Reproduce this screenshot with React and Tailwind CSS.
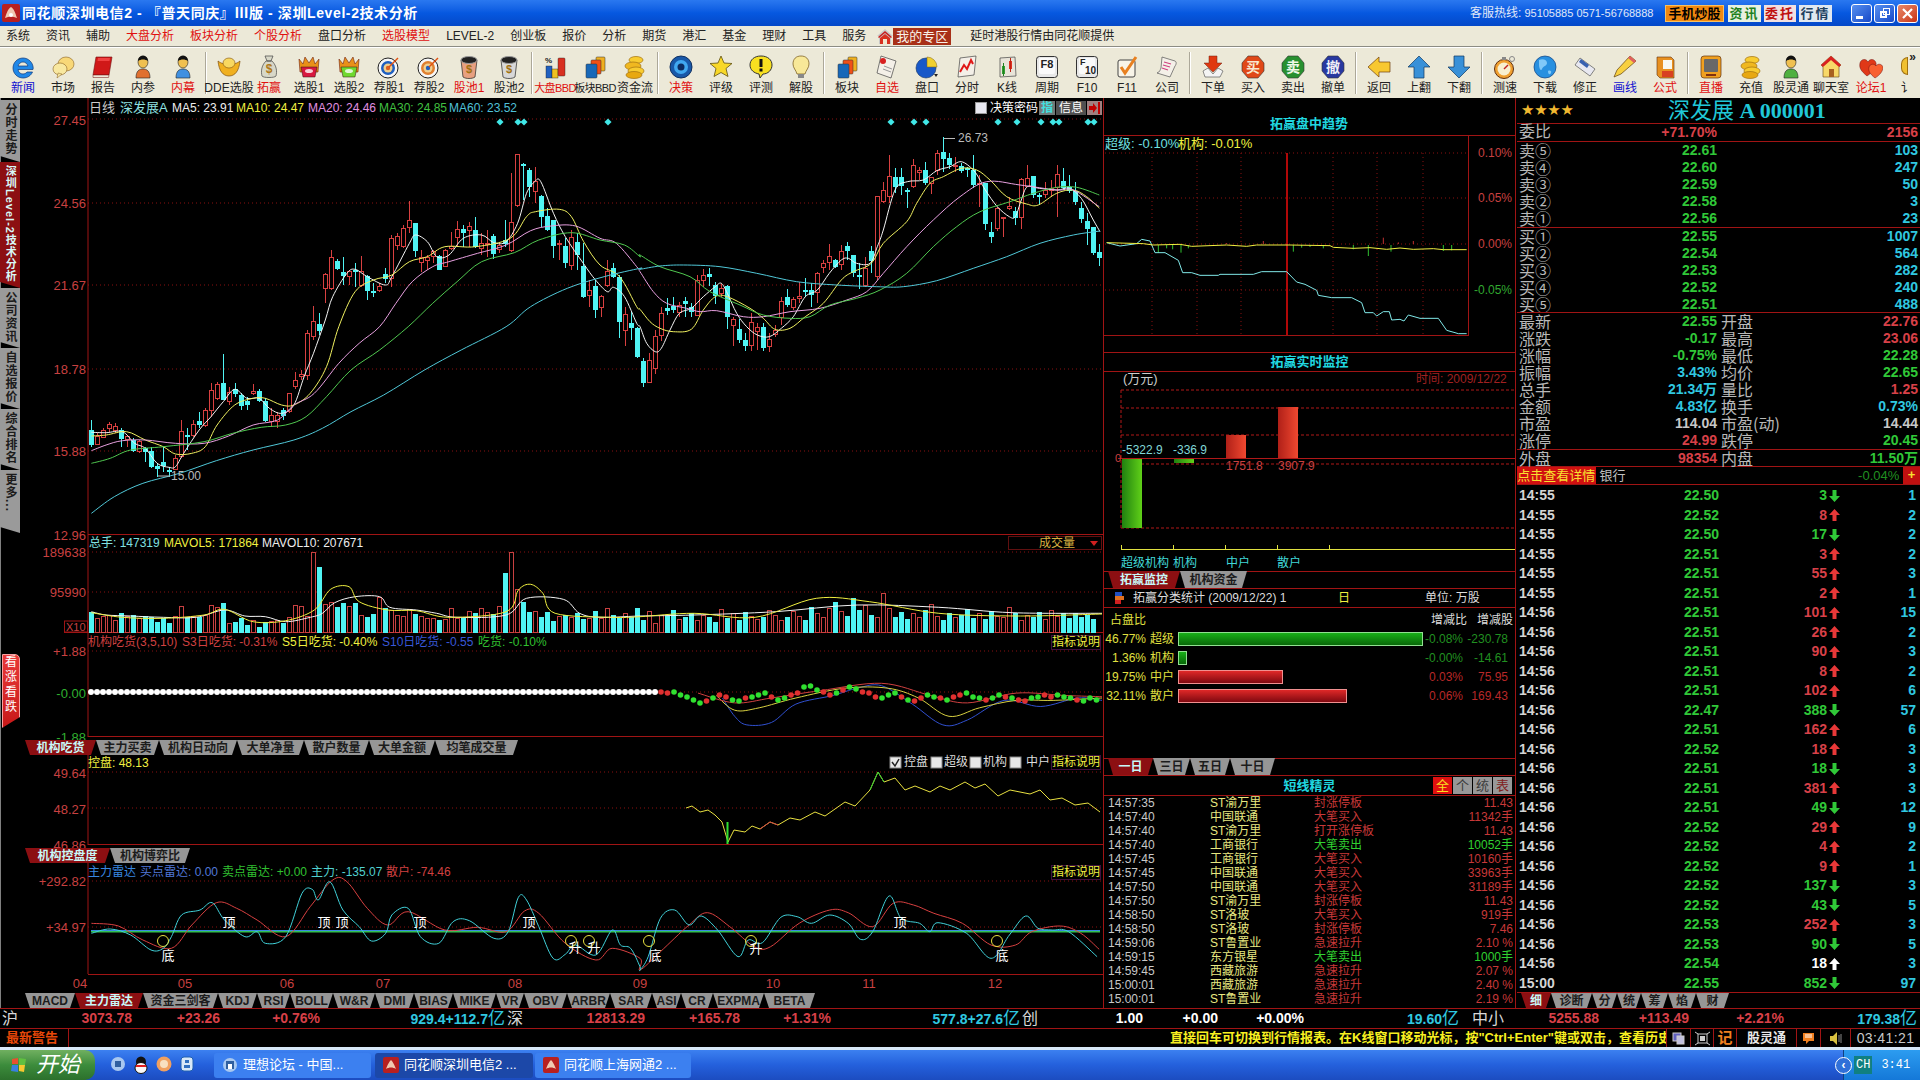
import React from 'react';

const A = [[960,990,1032,1040,1],[1000,1010,1032,1035,0],[985,990,1012,1015,0],[965,972,985,995,0],[970,980,992,1000,0],[985,990,1015,1040,1],[1005,1008,1018,1040,0],[1015,1022,1050,1055,1],[1020,1025,1055,1060,0],[1040,1045,1055,1085,1],[1040,1053,1100,1105,1],[1090,1100,1104,1130,1],[1040,1088,1097,1115,1],[1100,1110,1115,1130,1],[1065,1075,1108,1110,0],[960,995,1068,1075,0],[985,1005,1010,1050,1],[960,972,1005,1010,0],[935,965,972,985,1],[925,930,975,980,0],[850,870,930,950,0],[845,852,895,900,0],[762,850,897,900,1],[860,878,905,915,0],[850,868,880,890,1],[880,885,915,930,1],[890,903,912,930,1],[852,875,880,885,0],[868,873,900,905,1],[895,905,960,965,1],[925,945,965,980,0],[935,945,965,985,0],[925,932,945,960,1],[880,880,935,940,0],[815,842,860,868,0],[810,822,830,840,0],[690,700,825,840,0],[618,665,710,720,0],[640,672,692,705,1],[520,522,565,610,0],[450,472,565,570,0],[478,485,505,510,1],[470,518,526,555,1],[510,515,530,555,0],[490,510,515,560,1],[468,515,555,560,0],[525,530,572,600,1],[550,573,577,590,1],[550,558,570,575,0],[505,522,536,550,1],[405,415,535,560,0],[400,410,435,450,0],[375,385,440,445,0],[303,362,382,400,0],[368,370,450,470,1],[450,472,488,515,0],[465,472,480,510,0],[450,455,470,490,0],[465,468,508,510,1],[448,452,498,500,0],[395,440,445,450,0],[362,388,412,440,0],[375,388,396,440,1],[365,380,392,440,0],[352,392,438,445,1],[400,430,445,465,0],[390,430,432,470,0],[402,408,460,478,1],[430,436,448,460,0],[360,420,430,440,1],[220,368,450,455,0],[162,162,316,320,0],[190,192,195,300,1],[205,210,260,290,1],[200,245,275,310,0],[285,288,350,380,1],[325,348,388,392,1],[360,360,436,475,1],[420,430,433,480,0],[415,438,488,505,1],[390,412,495,510,0],[400,428,462,510,1],[430,498,590,595,1],[540,570,587,620,0],[540,558,627,655,1],[585,590,622,650,0],[480,515,555,560,0],[490,505,528,535,1],[525,532,665,715,1],[620,643,692,738,0],[635,670,682,720,1],[680,685,768,775,1]];
const B = [[775,785,848,862,1],[760,780,848,850,0],[690,708,805,822,0],[620,640,705,722,0],[595,626,630,645,1],[592,620,628,640,1],[605,615,638,650,0],[590,605,610,650,1],[610,622,635,650,1],[525,542,645,648,0],[508,525,540,560,0],[505,522,530,558,1],[545,555,585,612,1],[552,565,580,590,0],[555,558,650,688,1],[650,658,675,738,0],[658,688,718,728,1],[698,720,735,752,1],[640,668,735,752,0],[670,682,695,750,0],[668,682,742,752,1],[700,718,738,755,0],[675,690,704,710,0],[592,603,652,675,0],[568,592,612,620,1],[590,597,622,630,0],[545,590,595,610,0],[535,570,574,590,1],[548,570,582,620,1],[515,520,578,610,0],[480,490,503,520,0],[432,470,487,510,0],[478,480,500,505,1],[435,455,492,510,0],[425,438,452,480,1],[465,466,518,530,1],[490,525,528,568,1],[472,505,555,560,0],[438,453,480,520,1],[288,290,530,540,0],[245,272,305,310,0],[165,230,288,310,0],[205,232,260,278,1],[205,232,255,285,1],[265,272,274,325,1],[178,196,260,265,0],[200,212,216,240,0],[185,210,248,255,1],[230,232,250,282,0],[150,160,212,225,0],[112,156,174,215,1],[160,175,192,208,1],[170,195,198,215,0],[190,200,210,220,1],[200,205,208,230,1],[165,210,252,265,1],[225,250,252,320,0],[250,250,370,390,1],[365,398,408,428,1],[320,325,385,392,0],[350,352,355,410,0],[290,318,325,330,0],[320,333,352,375,1],[235,238,352,388,0],[195,235,258,260,0],[228,228,282,295,1],[280,286,290,315,1],[245,272,282,295,0],[240,265,270,290,0],[195,222,262,350,0],[205,243,262,270,1],[225,262,270,280,1],[245,275,305,315,1],[305,325,355,370,1],[340,365,385,435,1],[380,382,458,465,1],[432,458,472,497,1]];
const candles = [...A.map((c, i) => [91.4 + 6 * i, ...c]), ...B.map((c, i) => [643.3 + 6 * i, ...c])];

const za = (a) => a.map(([x, y]) => [x / 2.45, 100 + y / 3]);
const zb = (a) => a.map(([x, y]) => [640 + x / 3, 100 + y / 3]);
const smooth = (p) => {
  let d = `M${p[0][0].toFixed(1)} ${p[0][1].toFixed(1)}`;
  for (let i = 0; i < p.length - 1; i++) {
    const p0 = p[i - 1] || p[i], p1 = p[i], p2 = p[i + 1], p3 = p[i + 2] || p2;
    d += `C${(p1[0] + (p2[0] - p0[0]) / 6).toFixed(1)} ${(p1[1] + (p2[1] - p0[1]) / 6).toFixed(1)} ${(p2[0] - (p3[0] - p1[0]) / 6).toFixed(1)} ${(p2[1] - (p3[1] - p1[1]) / 6).toFixed(1)} ${p2[0].toFixed(1)} ${p2[1].toFixed(1)}`;
  }
  return d;
};

const MA = [
  ['#f4f4f4', [[224,997],[260,998],[300,995],[330,1030],[356,1045],[385,1090],[414,1102],[430,1100],[450,1060],[488,990],[517,950],[547,905],[575,868],[605,895],[635,895],[660,925],[690,940],[720,915],[745,830],[768,760],[797,660],[815,590],[850,520],[870,508],[900,530],[944,555],[960,530],[1003,430],[1018,405],[1047,425],[1070,470],[1100,465],[1135,415],[1180,405],[1210,428],[1240,425],[1268,370],[1290,280],[1310,245],[1325,245],[1356,340],[1385,410],[1429,490],[1459,540],[1488,575],[1503,562],[1530,590],[1560,670]], [[0,680],[20,730],[46,755],[64,745],[90,690],[118,640],[154,625],[190,590],[226,560],[244,550],[262,580],[290,640],[320,680],[352,705],[388,710],[424,685],[460,650],[496,590],[532,570],[568,520],[604,480],[625,475],[650,490],[690,490],[712,440],[730,390],[765,270],[802,245],[850,240],[890,212],[930,200],[964,185],[1000,210],[1020,240],[1036,270],[1072,320],[1108,350],[1126,350],[1144,300],[1162,260],[1198,265],[1252,270],[1288,265],[1324,295],[1360,360],[1380,395]]],
  ['#f0f060', [[224,1008],[260,1005],[310,995],[356,1020],[400,1040],[430,1062],[470,1060],[503,1040],[532,975],[575,915],[620,895],[650,895],[690,915],[720,915],[760,880],[800,800],[830,680],[870,575],[915,540],[960,525],[1003,485],[1047,470],[1090,440],[1165,440],[1250,415],[1290,350],[1312,335],[1370,328],[1400,350],[1430,425],[1470,495],[1518,530],[1560,620]], [[0,628],[30,665],[60,685],[100,695],[154,688],[190,630],[226,590],[262,590],[330,625],[370,655],[405,688],[450,685],[496,650],[550,610],[604,540],[640,515],[694,490],[730,430],[800,365],[830,310],[870,250],[910,230],[964,205],[1010,210],[1050,240],[1100,290],[1160,312],[1195,315],[1250,280],[1300,270],[1340,290],[1378,325]]],
  ['#e8a0e0', [[224,1052],[260,1035],[300,1022],[356,1020],[430,1030],[500,1030],[560,1008],[620,975],[680,960],[720,915],[770,880],[830,790],[880,730],[930,680],[970,610],[1010,545],[1060,500],[1100,485],[1170,460],[1240,435],[1300,392],[1350,378],[1410,378],[1470,415],[1510,430],[1560,500]], [[0,515],[40,575],[80,610],[140,625],[180,635],[230,632],[310,650],[370,650],[450,635],[540,625],[620,600],[680,575],[730,520],[800,440],[880,360],[960,290],[1040,245],[1140,255],[1250,270],[1300,270],[1378,320]]],
  ['#50c850', [[224,1090],[270,1075],[320,1050],[400,1040],[500,1025],[570,1000],[640,982],[700,975],[750,950],[800,890],[860,810],[930,750],[1000,680],[1060,610],[1120,545],[1180,485],[1260,458],[1320,420],[1400,398],[1470,420],[1530,435],[1568,470]], [[0,465],[60,500],[150,530],[210,575],[300,615],[370,645],[450,655],[510,650],[570,615],[650,595],[720,570],[800,520],[880,440],[950,380],[1020,335],[1110,305],[1180,280],[1250,262],[1310,262],[1378,285]]],
  ['#50c8d8', [[224,1240],[280,1190],[350,1150],[440,1120],[530,1082],[620,1050],[720,1020],[790,985],[860,935],[940,885],[1040,810],[1130,750],[1240,680],[1300,620],[1390,565],[1480,530],[1568,505]], [[0,508],[60,498],[130,495],[240,500],[350,520],[470,545],[590,555],[710,560],[790,560],[890,542],[1000,505],[1100,470],[1200,430],[1300,405],[1380,393]]],
];

const volTops = [245,265,260,255,270,250,258,255,265,258,262,275,265,280,258,228,260,260,262,255,225,232,220,280,275,265,285,270,290,275,275,272,280,262,225,228,260,68,112,222,218,232,218,228,220,255,260,252,202,235,240,255,258,238,252,260,265,265,270,268,235,265,265,243,250,235,248,252,228,130,68,178,215,245,243,262,245,272,258,255,262,248,268,265,243,265,235,256,265,
 250,262,235,270,245,280,255,258,240,268,262,250,272,255,262,275,238,265,250,270,245,258,268,262,240,255,272,262,245,258,270,230,250,262,235,215,245,258,205,240,225,255,262,190,235,260,245,268,250,262,240,222,258,270,248,262,255,238,265,250,268,242,258,262,232,250,270,255,262,245,268,240,258,250,264,248,262,255,268];
const volPts = { w: [[224,245],[260,255],[320,258],[400,262],[480,262],[550,240],[600,258],[650,260],[700,275],[760,262],[790,250],[820,218],[870,200],[930,200],[955,232],[1020,240],[1070,250],[1120,262],[1240,255],[1290,205],[1380,208],[1420,250],[1470,262],[1568,258],[1700,255],[1900,245],[2100,225],[2300,232],[2480,248],[2700,250]], y: [[224,248],[300,262],[400,265],[500,255],[550,238],[620,275],[700,272],[770,240],[810,178],[855,170],[880,215],[950,240],[1020,242],[1100,262],[1240,245],[1270,180],[1300,163],[1330,190],[1360,250],[1500,262],[1568,260],[1700,250],[1850,262],[2000,205],[2130,215],[2300,250],[2500,258],[2700,252]] };
const v = (a) => a.map(([x, y]) => [x / 2.45, 530 + y / 3]);

const radar = {
  cy: [[224,310],[270,297],[320,315],[370,360],[400,355],[420,320],[445,255],[490,240],[520,218],[550,270],[600,320],[630,305],[650,340],[700,320],[740,190],[765,178],[780,210],[808,155],[840,240],[880,290],[910,333],[945,310],[960,255],[1000,235],[1030,320],[1075,340],[1110,275],[1150,272],[1210,325],[1245,305],[1270,202],[1290,210],[1320,290],[1355,385],[1385,373],[1410,345],[1460,375],[1500,300],[1520,345],[1545,355],[1568,410]],
  cy2: [[0,420],[20,380],[50,265],[85,240],[120,285],[150,258],[190,300],[240,380],[265,330],[300,338],[345,262],[385,260],[420,280],[465,255],[510,280],[540,328],[570,305],[610,198],[640,265],[685,280],[710,305],[730,278],[800,310],[860,385],[905,315],[945,258],[975,295],[1010,300],[1050,305],[1120,380]],
  r: [[224,280],[290,288],[350,330],[420,355],[470,285],[530,218],[580,235],[630,270],[700,320],[760,230],[815,150],[850,155],[900,235],[950,285],[1000,245],[1090,300],[1170,292],[1240,305],[1285,243],[1320,250],[1385,340],[1460,390],[1500,355],[1568,385]],
  r2: [[0,420],[50,365],[120,285],[165,248],[220,290],[280,350],[320,350],[390,280],[465,240],[510,248],[570,290],[620,220],[670,225],[720,250],[790,280],[860,345],[920,345],[960,305],[1030,288],[1080,310],[1125,358]],
};
const r9 = (a) => a.map(([x, y]) => [x / 2.45, 830 + y / 3]);
const r10 = (a) => a.map(([x, y]) => [640 + x / 2.45, 830 + y / 3]);

const RED = '#a01414';
const AX = '#c84040';

function Grid({ y, x1 = 88, x2 = 1104 }) {
  return <line x1={x1} x2={x2} y1={y} y2={y} stroke="#8a1010" strokeDasharray="1 3" />;
}
function Ax({ y, children, fill = AX }) {
  return <text x="86" y={y + 5} textAnchor="end" fontSize="13" fill={fill}>{children}</text>;
}
function T({ x, y, fill = '#ddd', size = 12, children, anchor }) {
  return <text x={x} y={y + 4} fontSize={size} fill={fill} textAnchor={anchor}>{children}</text>;
}

function KlinePlot() {
  const dia = [500, 518, 524, 608, 891, 914, 926, 998, 1017, 1041, 1053, 1059, 1088, 1094];
  return (
    <svg width="1084" height="437" viewBox="20 98 1084 437" className="block overflow-visible">
      {[119, 203, 285, 369, 451].map((y) => <Grid key={y} y={y} />)}
      <line x1="88" x2="88" y1="98" y2="535" stroke={RED} />
      <line x1="88" x2="1104" y1="534.5" y2="534.5" stroke={RED} />
      <Ax y={120}>27.45</Ax><Ax y={203}>24.56</Ax><Ax y={285}>21.67</Ax><Ax y={369}>18.78</Ax><Ax y={451}>15.88</Ax><Ax y={535}>12.96</Ax>
      <T x={89} y={108} fill="#ccc" size={13}>日线</T>
      <T x={120} y={108} fill="#90e0e0" size={13}>深发展A</T>
      <T x={172} y={108} fill="#eee">MA5: 23.91</T>
      <T x={236} y={108} fill="#f0f040">MA10: 24.47</T>
      <T x={308} y={108} fill="#e090e0">MA20: 24.46</T>
      <T x={379} y={108} fill="#40c040">MA30: 24.85</T>
      <T x={449} y={108} fill="#50c0d8">MA60: 23.52</T>
      {dia.map((x) => <rect key={x} x={x - 2.5} y={119.5} width="5" height="5" fill="#40e8e8" transform={`rotate(45 ${x} 122)`} />)}
      {candles.map(([x, h, t, b, l, c], i) => {
        const X = Math.round(x);
        const col = c ? '#50f4f4' : '#d84040';
        const yy = (n) => 100 + n / 3;
        return (
          <g key={i} shapeRendering="crispEdges">
            <line x1={X + 0.5} x2={X + 0.5} y1={yy(h)} y2={yy(l)} stroke={col} />
            <rect x={X - 1.5} y={yy(t)} width="4" height={Math.max(1, (b - t) / 3)} fill={c ? col : '#000'} stroke={col} />
          </g>
        );
      })}
      {MA.map(([col, a, b]) => <path key={col} d={smooth([...za(a), ...zb(b)])} fill="none" stroke={col} strokeWidth="1" />)}
      <line x1="944" x2="955" y1="138.5" y2="138.5" stroke="#bbb" />
      <T x={958} y={138} fill="#bbb" size={12}>26.73</T>
      <line x1="158" x2="170" y1="476" y2="476" stroke="#bbb" />
      <T x={171} y={476} fill="#bbb" size={12}>15.00</T>
    </svg>
  );
}

function VolPlot() {
  return (
    <svg width="1104" height="98" viewBox="0 535 1104 98" className="block">
      <line x1="88" x2="88" y1="535" y2="633" stroke={RED} />
      <Grid y={552} /><Grid y={592} />
      <line x1="64" x2="1104" y1="632.5" y2="632.5" stroke={RED} />
      <rect x="64.5" y="621" width="23" height="11" fill="none" stroke={RED} />
      <text x="66" y="631" fontSize="11" fill={AX}>X10</text>
      <Ax y={552}>189638</Ax><Ax y={592}>95990</Ax>
      <T x={89} y={543} fill="#80e0e0">总手: 147319</T>
      <T x={164} y={543} fill="#f0f040">MAVOL5: 171864</T>
      <T x={262} y={543} fill="#eee">MAVOL10: 207671</T>
      {volTops.map((t, i) => {
        const c = candles[i] ? candles[i][5] : 0;
        const X = Math.round(91.4 + 6 * i);
        const y = 530 + t / 3;
        return c
          ? <rect key={i} x={X - 2} y={y} width="5" height={632.5 - y} fill="#50f4f4" shapeRendering="crispEdges" />
          : <rect key={i} x={X - 1.5} y={y} width="4" height={632.5 - y} fill="#000" stroke="#c84040" shapeRendering="crispEdges" />;
      })}
      <path d={smooth(v(volPts.w))} fill="none" stroke="#f4f4f4" />
      <path d={smooth(v(volPts.y))} fill="none" stroke="#f0f040" />
    </svg>
  );
}

const dotCols = 'rrgggggrgrrggrgggrggrrgggrrgrggrrrgggrgrrggrgrrgggrggrgrrggrrgggrg';
const dotY = [0,1,0,3,5,8,11,9,6,3,5,8,9,6,5,3,1,5,8,6,3,1,-5,-6,-2,0,3,1,-2,-5,-3,0,1,5,6,3,1,5,8,9,6,3,5,6,8,5,3,1,5,6,8,6,3,5,6,8,9,6,5,3,5,3,5,6,8,9,6,8];

function IndicatorPlot() {
  const white = [];
  for (let x = 91; x < 660; x += 6) white.push(x);
  const sc = (a) => a.map(([x, y]) => [x * 1.2245, y * 1.2245]);
  return (
    <svg width="1104" height="104" viewBox="0 633 1104 104" className="block overflow-visible">
      <line x1="88" x2="88" y1="633" y2="737" stroke={RED} />
      <Grid y={651} /><Grid y={692} />
      <line x1="88" x2="1104" y1="736.5" y2="736.5" stroke={RED} />
      <Ax y={651}>+1.88</Ax><Ax y={693} fill="#30b030">-0.00</Ax><Ax y={737} fill="#30b030">-1.88</Ax>
      <T x={88} y={642} fill="#d04040">机构吃货(3,5,10)</T>
      <T x={182} y={642} fill="#d04040">S3日吃货: -0.31%</T>
      <T x={282} y={642} fill="#f0f040">S5日吃货: -0.40%</T>
      <T x={382} y={642} fill="#3858d8">S10日吃货: -0.55</T>
      <T x={478} y={642} fill="#30c030">吃货: -0.10%</T>
      <path d={smooth(sc([[590,570],[600,585],[610,592],[630,590],[650,575],[680,568],[700,562],[720,560],[745,575],[770,592],[790,588],[820,572],[850,577],[880,570],[900,572]]))} fill="none" stroke="#3050d0" />
      <path d={smooth(sc([[585,568],[600,580],[620,578],[650,570],[690,562],[725,562],[750,570],[775,585],[800,578],[830,572],[860,572],[900,570]]))} fill="none" stroke="#d8d040" />
      <path d={smooth(sc([[570,566],[600,574],[630,570],[670,564],[720,558],[760,568],[790,574],[830,566],[870,568],[900,569]]))} fill="none" stroke="#d04040" />
      {white.map((x) => <circle key={x} cx={x} cy={692} r="3" fill="#fff" />)}
      {dotY.map((d, i) => <circle key={i} cx={661 + i * 6.5} cy={692 + d} r="2.8" fill={dotCols[i] === 'r' ? '#e03030' : '#30e030'} />)}
    </svg>
  );
}

function KongPlot() {
  const line = [[686,808],[692,806],[700,812],[708,810],[715,815],[722,822],[728,842],[734,830],[745,832],[752,826],[760,829],[770,822],[778,825],[790,818],[800,820],[815,812],[825,816],[845,802],[855,806],[870,790],[878,772],[884,782],[895,778],[905,790],[915,786],[930,792],[940,786],[950,790],[965,782],[975,788],[985,784],[998,796],[1010,790],[1030,794],[1040,790],[1050,800],[1062,798],[1075,805],[1088,803],[1100,812]];
  const boxes = [[890, 1, '控盘', 904], [931, 0, '超级', 944], [970, 0, '机构', 983], [1010, 0, '中户', 1026]];
  return (
    <svg width="1104" height="90" viewBox="0 755 1104 90" className="block overflow-visible">
      <line x1="88" x2="88" y1="755" y2="845" stroke={RED} />
      <Grid y={772} /><Grid y={808} />
      <line x1="88" x2="1104" y1="844.5" y2="844.5" stroke={RED} />
      <Ax y={773}>49.64</Ax><Ax y={809}>48.27</Ax><Ax y={845}>46.86</Ax>
      <T x={88} y={763} fill="#f0f040">控盘: 48.13</T>
      <polyline points={line.map((p) => p.join(',')).join(' ')} fill="none" stroke="#e8e040" />
      <polyline points="760,829 770,822 778,825" fill="none" stroke="#d04040" />
      <polyline points="870,790 878,772 884,782" fill="none" stroke="#30d030" />
      <line x1="727.5" x2="727.5" y1="822" y2="844" stroke="#30e030" strokeWidth="2" />
      {boxes.map(([x, c, t, tx]) => (
        <g key={t}>
          <rect x={x} y={757} width="11" height="11" fill="#e8e8e8" stroke="#888" />
          {c ? <polyline points={`${x + 2},762 ${x + 5},766 ${x + 9},759`} fill="none" stroke="#222" strokeWidth="1.5" /> : null}
          <T x={tx} y={762} fill="#ddd">{t}</T>
        </g>
      ))}
    </svg>
  );
}

function Mark({ x, y, t, c, cx }) {
  return (
    <g>
      {c ? <circle cx={cx} cy={941} r="5.5" fill="none" stroke="#e8e040" /> : null}
      <text x={x} y={y} fontSize="13" fill="#fff" textAnchor="middle">{t}</text>
    </g>
  );
}

function RadarPlot() {
  const months = [['04', 80], ['05', 185], ['06', 287], ['07', 383], ['08', 515], ['09', 640], ['10', 773], ['11', 869], ['12', 995]];
  const tops = [[229, '顶'], [324, '顶'], [342, '顶'], [420, '顶'], [529, '顶'], [900, '顶']];
  return (
    <svg width="1104" height="130" viewBox="0 863 1104 130" className="block">
      <line x1="88" x2="88" y1="863" y2="974" stroke={RED} />
      <Grid y={881} /><Grid y={927} />
      <line x1="88" x2="1104" y1="974.5" y2="974.5" stroke={RED} />
      <Ax y={881}>+292.82</Ax><Ax y={927}>+34.97</Ax>
      <T x={88} y={872} fill="#3888e0">主力雷达</T>
      <T x={140} y={872} fill="#5078d8">买点雷达: 0.00</T>
      <T x={222} y={872} fill="#30c030">卖点雷达: +0.00</T>
      <T x={311} y={872} fill="#50d0d0">主力: -135.07</T>
      <T x={386} y={872} fill="#d04040">散户: -74.46</T>
      <line x1="91" x2="1100" y1="931.5" y2="931.5" stroke="#30c050" strokeWidth="2" />
      <line x1="91" x2="1100" y1="930.5" y2="930.5" stroke="#3888e0" />
      <path d={smooth([...r9(radar.r), ...r10(radar.r2)])} fill="none" stroke="#d84040" />
      <path d={smooth([...r9(radar.cy), ...r10(radar.cy2)])} fill="none" stroke="#40d0d8" />
      {tops.map(([x, t]) => <Mark key={x} x={x} y={927} t={t} />)}
      <Mark x={168} y={960} t="底" c cx={163} />
      <Mark x={575} y={952} t="升" c cx={571} />
      <Mark x={594} y={952} t="升" c cx={589} />
      <Mark x={655} y={960} t="底" c cx={649} />
      <Mark x={756} y={953} t="升" c cx={751} />
      <Mark x={1002} y={960} t="底" c cx={997} />
      {months.map(([t, x]) => <text key={t} x={x} y="988" fontSize="13" fill={AX} textAnchor="middle">{t}</text>)}
    </svg>
  );
}

function Tab({ w, active, children, h = 'h-[15px]' }) {
  return (
    <div style={{ width: w }} className={`${h} flex items-center justify-center text-[12px] font-bold whitespace-nowrap [clip-path:polygon(0_0,100%_0,calc(100%-5px)_100%,5px_100%)] ${active ? 'bg-[#8c0f12] text-[#c8f8f8]' : 'bg-[#969696] text-[#1c1c1c]'}`}>
      {children}
    </div>
  );
}
function TabRow({ items, h, cls = 'pl-[25px]' }) {
  return (
    <div className={`flex items-center ${cls}`}>
      {items.map(([t, w, a]) => <Tab key={t} w={w} active={a} h={h}>{t}</Tab>)}
    </div>
  );
}

function Note() {
  return <div className="absolute right-[3px] w-[50px] h-[15px] border border-[#401040] text-[12px] leading-[13px] text-[#f0f040] text-center whitespace-nowrap">指标说明</div>;
}

function SideTab({ h, active, t, size = 'text-[12px]' }) {
  return (
    <div style={{ height: h }} className={`w-[20px] flex justify-start pt-[3px] items-center font-bold ${size} [writing-mode:vertical-rl] whitespace-nowrap tracking-[1px] [clip-path:polygon(0_0,100%_0,100%_100%,0_calc(100%-6px))] ${active ? 'bg-[#8c0f12] text-[#d8f8f8]' : 'bg-[#9a9a9a] text-[#1c1c1c]'}`}>
      {t}
    </div>
  );
}

function LeftCol() {
  return (
    <div className="w-[1104px] flex flex-col">
      <div className="relative flex h-[437px]">
        <div className="flex flex-col w-[20px] pt-[2px]">
          <SideTab h={62} t="分时走势" />
          <SideTab h={126} active t="深圳Level-2技术分析" size="text-[11px]" />
          <SideTab h={60} t="公司资讯" />
          <SideTab h={61} t="自选报价" />
          <SideTab h={61} t="综合排名" />
          <SideTab h={63} t="更多..." />
        </div>
        <KlinePlot />
        <div className="absolute top-[3px] left-[975px] flex items-center h-[14px]">
          <div className="w-[12px] h-[12px] bg-[#e8e8f0] border border-[#999]" />
          <span className="ml-[3px] w-[48px] text-[12px] text-white whitespace-nowrap">决策密码</span>
          <span className="ml-[1px] w-[16px] h-[14px] bg-[#707878] text-[12px] font-bold text-[#40e0e0] leading-[14px] text-center">指</span>
          <span className="ml-[1px] w-[30px] h-[14px] bg-[#505050] text-[12px] text-white leading-[14px] text-center">信息</span>
          <span className="ml-[1px] w-[15px] h-[14px] bg-[#a08080] flex items-center justify-center">
            <svg width="12" height="12" viewBox="0 0 12 12"><path d="M0 4h4V1l4 5-4 5V8H0z" fill="#c00000" /><rect x="9" y="0" width="2" height="12" fill="#c00000" /></svg>
          </span>
        </div>
      </div>
      <div className="relative h-[98px]">
        <VolPlot />
        <div className="absolute top-[1px] right-[2px] w-[94px] h-[14px] border border-[#601010] text-[12px] leading-[12px] text-[#d8b040] pl-[30px]">
          成交量
          <span className="absolute right-[3px] top-[4px] w-0 h-0 border-x-[4px] border-x-transparent border-t-[5px] border-t-[#d02020]" />
        </div>
      </div>
      <div className="relative h-[104px]">
        <IndicatorPlot />
        <div className="absolute top-[2px] right-0 left-0"><Note /></div>
        <div className="absolute left-[2px] top-[21px] w-[18px] h-[74px] rounded-r-[5px] bg-gradient-to-b from-[#e83838] to-[#c81818] border border-[#f8a0a0] text-[12px] leading-[15px] text-white flex flex-col items-center whitespace-nowrap [clip-path:polygon(0_0,100%_0,100%_85%,0_100%)]">
          <span>看</span><span>涨</span><span>看</span><span>跌</span>
        </div>
      </div>
      <div className="h-[18px] pt-[3px]"><TabRow h="h-[15px]" items={[['机构吃货', 71, 1], ['主力买卖', 63], ['机构日动向', 78], ['大单净量', 67], ['散户数量', 65], ['大单金额', 66], ['均笔成交量', 83]]} /></div>
      <div className="relative h-[90px]">
        <KongPlot />
        <div className="absolute top-0 right-0 left-0"><Note /></div>
      </div>
      <div className="h-[18px] pt-[3px]"><TabRow h="h-[15px]" items={[['机构控盘度', 85, 1], ['机构博弈比', 80]]} /></div>
      <div className="relative h-[130px]">
        <RadarPlot />
        <div className="absolute top-[2px] right-0 left-0"><Note /></div>
      </div>
      <div className="h-[15px]">
        <TabRow h="h-[15px]" items={[['MACD', 50], ['主力雷达', 68, 1], ['资金三剑客', 75], ['KDJ', 39], ['RSI', 33], ['BOLL', 43], ['W&R', 42], ['DMI', 39], ['BIAS', 39], ['MIKE', 43], ['VR', 28], ['OBV', 43], ['ARBR', 43], ['SAR', 42], ['ASI', 29], ['CR', 32], ['EXPMA', 51], ['BETA', 51]]} />
      </div>
    </div>
  );
}

function TrendPlot() {
  const pt = (a) => a.map(([x, y]) => [1100 + x / 3, 100 + y / 3].join(',')).join(' ');
  const cy = [[20,425],[60,435],[110,428],[125,415],[150,420],[165,455],[195,455],[235,478],[248,515],[275,515],[300,523],[355,523],[360,520],[460,520],[485,512],[560,512],[590,543],[615,550],[650,568],[655,583],[695,590],[755,590],[785,605],[795,635],[820,635],[830,645],[850,632],[868,632],[875,657],[900,655],[912,660],[925,642],[960,652],[1015,652],[1040,688],[1065,695],[1075,698],[1100,698]];
  const ye = [[20,425],[130,428],[160,432],[240,430],[275,436],[380,432],[440,436],[470,432],[570,432],[690,434],[700,439],[760,442],[810,440],[860,445],[900,441],[940,445],[1000,443],[1030,446],[1100,446]];
  const ticksG = [[175,455],[200,442],[218,445],[243,455],[265,442],[580,452],[605,440],[630,438],[670,442],[760,445],[805,465],[873,452],[1030,450],[1055,448]];
  const ticksR = [[380,426],[490,420],[850,410],[895,424],[940,420]];
  return (
    <svg width="411" height="200" viewBox="1104 135 411 200" className="block">
      {[152, 197, 243, 289].map((y) => <line key={y} x1="1105" x2="1468" y1={y} y2={y} stroke="#8a1010" strokeDasharray="1 3" />)}
      {[1152, 1197, 1241, 1333, 1377, 1423].map((x) => <line key={x} x1={x} x2={x} y1="152" y2="335" stroke="#8a1010" strokeDasharray="1 3" />)}
      <line x1="1287" x2="1287" y1="152" y2="335" stroke="#b00808" strokeWidth="2" />
      <line x1="1468.5" x2="1468.5" y1="135" y2="335" stroke={RED} />
      <line x1="1104" x2="1469" y1="334.5" y2="334.5" stroke={RED} />
      <T x={1105} y={143} fill="#70e0e0" size={13}>超级: -0.10%</T>
      <T x={1178} y={143} fill="#f0f040" size={13}>机构: -0.01%</T>
      {ticksG.map(([x, y]) => <line key={x} x1={1100 + x / 3} x2={1100 + x / 3} y1="244" y2={100 + y / 3} stroke="#30c030" />)}
      {ticksR.map(([x, y]) => <line key={x} x1={1100 + x / 3} x2={1100 + x / 3} y1="243" y2={100 + y / 3} stroke="#c03030" />)}
      <polyline points={pt(cy)} fill="none" stroke="#80e8e8" />
      <polyline points={pt(ye)} fill="none" stroke="#f0f040" />
      <T x={1478} y={152} fill={AX} size={12}>0.10%</T>
      <T x={1478} y={197} fill={AX} size={12}>0.05%</T>
      <T x={1478} y={243} fill={AX} size={12}>0.00%</T>
      <T x={1474} y={289} fill="#30a830" size={12}>-0.05%</T>
    </svg>
  );
}

function RealPlot() {
  return (
    <svg width="411" height="199" viewBox="1104 371 411 199" className="block">
      <defs>
        <linearGradient id="gg" x1="0" x2="1" y1="0" y2="0"><stop offset="0" stopColor="#208010" /><stop offset="1" stopColor="#60d018" /></linearGradient>
        <linearGradient id="rr" x1="0" x2="1" y1="0" y2="0"><stop offset="0" stopColor="#b02018" /><stop offset="1" stopColor="#f04830" /></linearGradient>
      </defs>
      <T x={1123} y={378} fill="#ccc" size={13}>(万元)</T>
      <text x="1416" y="382" fontSize="12" fill="#a02020">时间: 2009/12/22</text>
      {[389, 407, 434, 463, 527].map((y) => <line key={y} x1="1121" x2="1515" y1={y} y2={y} stroke="#b01818" strokeDasharray="3 2" />)}
      <line x1="1121" x2="1121" y1="389" y2="527" stroke="#b01818" strokeDasharray="3 2" />
      <line x1="1118" x2="1515" y1="457.5" y2="457.5" stroke="#b01818" />
      <text x="1115" y="461" fontSize="11" fill={AX}>0</text>
      <rect x="1122" y="458" width="20" height="69" fill="url(#gg)" />
      <rect x="1174" y="458" width="20" height="4" fill="url(#gg)" />
      <rect x="1226" y="434" width="20" height="23" fill="url(#rr)" />
      <rect x="1278" y="406" width="20" height="51" fill="url(#rr)" />
      <T x={1122} y={449} fill="#80d8d8" size={12}>-5322.9</T>
      <T x={1173} y={449} fill="#80d8d8" size={12}>-336.9</T>
      <T x={1226} y={465} fill="#c84040" size={12}>1751.8</T>
      <T x={1278} y={465} fill="#c84040" size={12}>3907.9</T>
      <line x1="1121" x2="1515" y1="548.5" y2="548.5" stroke="#e0e040" />
      {[1121, 1173, 1225, 1277, 1329].map((x) => <line key={x} x1={x + 0.5} x2={x + 0.5} y1="544" y2="548" stroke="#e0e040" />)}
      <T x={1121} y={562} fill="#40d8d8" size={12}>超级机构</T>
      <T x={1173} y={562} fill="#40d8d8" size={12}>机构</T>
      <T x={1226} y={562} fill="#40d8d8" size={12}>中户</T>
      <T x={1277} y={562} fill="#40d8d8" size={12}>散户</T>
    </svg>
  );
}

const stat = [
  ['46.77%', '超级', 'w-[245px]', 'g', '-0.08%', '-230.78'],
  ['1.36%', '机构', 'w-[9px]', 'g', '-0.00%', '-14.61'],
  ['19.75%', '中户', 'w-[105px]', 'r', '0.03%', '75.95'],
  ['32.11%', '散户', 'w-[169px]', 'r', '0.06%', '169.43'],
];

const sprite = [
  ['14:57:35','ST渝万里','封涨停板','11.43','r'],['14:57:40','中国联通','大笔买入','11342手','r'],['14:57:40','ST渝万里','打开涨停板','11.43','r'],['14:57:40','工商银行','大笔卖出','10052手','g'],['14:57:45','工商银行','大笔买入','10160手','r'],['14:57:45','中国联通','大笔买入','33963手','r'],['14:57:50','中国联通','大笔买入','31189手','r'],['14:57:50','ST渝万里','封涨停板','11.43','r'],['14:58:50','ST洛玻','大笔买入','919手','r'],['14:58:50','ST洛玻','封涨停板','7.46','r'],['14:59:06','ST鲁置业','急速拉升','2.10 %','r'],['14:59:15','东方银星','大笔卖出','1000手','g'],['14:59:45','西藏旅游','急速拉升','2.07 %','r'],['15:00:01','西藏旅游','急速拉升','2.40 %','r'],['15:00:01','ST鲁置业','急速拉升','2.19 %','r'],
];

function MidCol() {
  return (
    <div className="relative w-[411px] flex flex-col border-l-0">
      <div className="h-[37px] flex items-end justify-center pb-[2px] pr-[1px] text-[13px] font-bold text-[#20d8e0]">拓赢盘中趋势</div>
      <div className="border-t border-[#a01414]"><TrendPlot /></div>
      <div className="h-[16px]" />
      <div className="h-[20px] border-y border-[#a01414] flex items-center justify-center text-[13px] font-bold text-[#20d8e0]">拓赢实时监控</div>
      <RealPlot />
      <div className="h-[18px] border-y border-[#a01414] flex items-end">
        <TabRow h="h-[17px]" cls="pl-[4px]" items={[['拓赢监控', 72, 1], ['机构资金', 67]]} />
      </div>
      <div className="h-[19px] border-b border-[#a01414] flex items-center pl-[10px] text-[12px] text-[#ddd] whitespace-nowrap">
        <svg width="12" height="12" viewBox="0 0 12 12" className="mr-[7px]"><rect x="1" y="0" width="7" height="4" fill="#2050c0" /><rect x="1" y="4" width="9" height="4" fill="#e07020" /><rect x="1" y="8" width="6" height="4" fill="#d02020" /></svg>
        <span className="w-[205px]">拓赢分类统计 (2009/12/22) 1</span>
        <span className="w-[87px] text-[#f0f040]">日</span>
        <span>单位: 万股</span>
      </div>
      <div className="h-[150px] pt-[3px] text-[12px]">
        <div className="h-[18px] flex items-center whitespace-nowrap">
          <span className="ml-[6px] w-[226px] text-[#e0e040]">占盘比</span>
          <span className="ml-[95px] w-[37px] text-[#ddd]">增减比</span>
          <span className="ml-[9px] text-[#ddd]">增减股</span>
        </div>
        {stat.map(([p, l, w, c, a, b]) => (
          <div key={l} className="h-[19px] flex items-center whitespace-nowrap">
            <span className="w-[42px] text-right text-[#e0e040]">{p}</span>
            <span className="ml-[4px] w-[28px] text-[#e0e040]">{l}</span>
            <div className="w-[245px] ml-[0px]">
              <div className={`h-[14px] ${w} border ${c === 'g' ? 'border-[#90e090] bg-gradient-to-b from-[#18b018] to-[#086808]' : 'border-[#f09090] bg-gradient-to-b from-[#e02828] to-[#800810]'}`} />
            </div>
            <span className={`w-[40px] text-right ${c === 'g' ? 'text-[#209020]' : 'text-[#b82828]'}`}>{a}</span>
            <span className={`w-[45px] text-right ${c === 'g' ? 'text-[#209020]' : 'text-[#b82828]'}`}>{b}</span>
          </div>
        ))}
      </div>
      <div className="h-[18px] border-y border-[#a01414] flex items-end">
        <TabRow h="h-[17px]" cls="pl-[4px]" items={[['一日', 45, 1], ['三日', 37], ['五日', 40], ['十日', 45]]} />
      </div>
      <div className="relative h-[20px] border-b border-[#a01414] flex items-center justify-center text-[13px] font-bold text-[#20d8e0]">
        短线精灵
        <div className="absolute right-[3px] top-[1px] flex text-[13px] font-normal">
          <span className="w-[19px] h-[17px] leading-[17px] text-center bg-[#e01010] text-[#f8e020]">全</span>
          <span className="w-[19px] h-[17px] leading-[17px] text-center bg-[#989898] text-[#3a3a3a] ml-[1px]">个</span>
          <span className="w-[19px] h-[17px] leading-[17px] text-center bg-[#989898] text-[#3a3a3a] ml-[1px]">统</span>
          <span className="w-[19px] h-[17px] leading-[17px] text-center bg-[#989898] text-[#802020] ml-[1px]">表</span>
        </div>
      </div>
      <div className="pl-[4px] pr-[2px] pt-[0px] text-[12px]">
        {sprite.map(([t, n, e, val, c], i) => (
          <div key={i} className="h-[14px] leading-[14px] flex whitespace-nowrap">
            <span className="w-[102px] text-[#c8c8c8]">{t}</span>
            <span className="w-[104px] text-[#e8e880]">{n}</span>
            <span className={`w-[90px] ${c === 'g' ? 'text-[#30d030]' : 'text-[#c83838]'}`}>{e}</span>
            <span className={`w-[109px] text-right ${c === 'g' ? 'text-[#30d030]' : 'text-[#c83838]'}`}>{val}</span>
          </div>
        ))}
      </div>
    </div>
  );
}

const G = 'text-[#30c838]', Rr = 'text-[#d84048]', C = 'text-[#30c8e0]', W = 'text-[#c8c8c8]';
const Lb = ({ children }) => <span className="font-['Noto_Sans_CJK_SC',sans-serif] text-[16px] leading-[17px] text-[#b8b8b8] whitespace-nowrap">{children}</span>;

function Q({ l, p, q }) {
  return (
    <div className="h-[17px] flex items-center">
      <span className="w-[198px] flex justify-between"><Lb>{l}</Lb><span className={`${G} text-[14px] font-bold leading-[17px]`}>{p}</span></span>
      <span className={`w-[201px] text-right ${C} text-[14px] font-bold leading-[17px]`}>{q}</span>
    </div>
  );
}
function S({ a, av, ac, b, bv, bc }) {
  return (
    <div className="h-[17px] flex items-center">
      <span className="w-[198px] flex justify-between"><Lb>{a}</Lb><span className={`${ac} text-[14px] font-bold leading-[17px]`}>{av}</span></span>
      <span className="w-[201px] pl-[4px] flex justify-between"><Lb>{b}</Lb><span className={`${bc} text-[14px] font-bold leading-[17px]`}>{bv}</span></span>
    </div>
  );
}
const ticks = [
  ['14:55','22.50','3','d','1'],['14:55','22.52','8','u','2'],['14:55','22.50','17','d','2'],['14:55','22.51','3','u','2'],['14:55','22.51','55','u','3'],['14:55','22.51','2','u','1'],['14:56','22.51','101','u','15'],['14:56','22.51','26','u','2'],['14:56','22.51','90','u','3'],['14:56','22.51','8','u','2'],['14:56','22.51','102','u','6'],['14:56','22.47','388','d','57'],['14:56','22.51','162','u','6'],['14:56','22.52','18','u','3'],['14:56','22.51','18','d','3'],['14:56','22.51','381','u','3'],['14:56','22.51','49','d','12'],['14:56','22.52','29','u','9'],['14:56','22.52','4','u','2'],['14:56','22.52','9','u','1'],['14:56','22.52','137','d','3'],['14:56','22.52','43','d','5'],['14:56','22.53','252','u','3'],['14:56','22.53','90','d','5'],['14:56','22.54','18','n','3'],['15:00','22.55','852','d','97'],
];
function Arrow({ k }) {
  const col = k === 'u' ? '#e83838' : k === 'd' ? '#30c838' : '#ffffff';
  return (
    <svg width="11" height="12" viewBox="0 0 11 12" className="ml-[2px]">
      <path d={k === 'd' ? 'M3.5 0h4v6H11L5.5 12 0 6h3.5z' : 'M3.5 12h4V6H11L5.5 0 0 6h3.5z'} fill={col} />
    </svg>
  );
}

function RightCol() {
  return (
    <div className="w-[405px] pl-[1px] flex flex-col border-l border-[#a01414]">
      <div className="h-[25px] flex items-center relative">
        <span className="absolute left-[4px] top-[2px] text-[15px] leading-[20px] text-[#f0b830] font-['DejaVu_Sans'] tracking-[-0.3px]">★★★★</span>
        <span className="ml-[151px] font-['Liberation_Serif','Noto_Sans_CJK_SC',serif] text-[22px] leading-[25px] text-[#20c8d8] whitespace-nowrap"><span className="font-normal">深发展</span><span className="font-bold"> A 000001</span></span>
      </div>
      <div className="h-[19px] border-y border-[#a01414] flex items-center pl-[2px]">
        <span className="w-[198px] flex justify-between"><Lb>委比</Lb><span className={`${Rr} text-[14px] font-bold`}>+71.70%</span></span>
        <span className={`w-[201px] text-right ${Rr} text-[14px] font-bold`}>2156</span>
      </div>
      <div className="h-[85px] pl-[2px]">
        <Q l="卖⑤" p="22.61" q="103" /><Q l="卖④" p="22.60" q="247" /><Q l="卖③" p="22.59" q="50" /><Q l="卖②" p="22.58" q="3" /><Q l="卖①" p="22.56" q="23" />
      </div>
      <div className="h-[85px] border-t border-[#a01414] pl-[2px]">
        <Q l="买①" p="22.55" q="1007" /><Q l="买②" p="22.54" q="564" /><Q l="买③" p="22.53" q="282" /><Q l="买④" p="22.52" q="240" /><Q l="买⑤" p="22.51" q="488" />
      </div>
      <div className="h-[137px] border-t border-[#a01414] pl-[2px]">
        <S a="最新" av="22.55" ac={G} b="开盘" bv="22.76" bc={Rr} />
        <S a="涨跌" av="-0.17" ac={G} b="最高" bv="23.06" bc={Rr} />
        <S a="涨幅" av="-0.75%" ac={G} b="最低" bv="22.28" bc={G} />
        <S a="振幅" av="3.43%" ac={C} b="均价" bv="22.65" bc={G} />
        <S a="总手" av="21.34万" ac={C} b="量比" bv="1.25" bc={Rr} />
        <S a="金额" av="4.83亿" ac={C} b="换手" bv="0.73%" bc={C} />
        <S a="市盈" av="114.04" ac={W} b="市盈(动)" bv="14.44" bc={W} />
        <S a="涨停" av="24.99" ac={Rr} b="跌停" bv="20.45" bc={G} />
      </div>
      <div className="h-[18px] border-y border-[#a01414] pl-[2px] flex items-center">
        <S a="外盘" av="98354" ac={Rr} b="内盘" bv="11.50万" bc={G} />
      </div>
      <div className="h-[18px] border-b border-[#a01414] flex items-center whitespace-nowrap">
        <span className="w-[79px] h-[17px] leading-[17px] text-center bg-[#d01010] text-[#f8e030] text-[13px]">点击查看详情</span>
        <span className="ml-[4px] w-[260px] text-[13px] text-[#c0c0c0]">银行</span>
        <span className="w-[40px] text-[13px] text-[#209020] text-right">-0.04%</span>
        <span className="ml-[5px] w-[17px] h-[17px] bg-[#c01010] text-[#f8e030] text-[13px] font-bold leading-[16px] text-center">+</span>
      </div>
      <div className="h-[507px] pt-[1px] pl-[2px] overflow-hidden">
        {ticks.map(([t, p, n, k, c], i) => (
          <div key={i} className="h-[19.5px] flex items-center text-[14px] font-bold whitespace-nowrap">
            <span className="w-[50px] text-[#d4d4d4]">{t}</span>
            <span className={`w-[150px] text-right ${G}`}>{p}</span>
            <span className={`w-[108px] text-right ${k === 'u' ? Rr : k === 'd' ? G : 'text-white'}`}>{n}</span>
            <Arrow k={k} />
            <span className={`w-[76px] text-right ${C}`}>{c}</span>
          </div>
        ))}
      </div>
      <div className="h-[16px] border-t border-[#a01414]">
        <TabRow h="h-[15px]" cls="pl-[4px]" items={[['细', 30, 1], ['诊断', 41], ['分', 25], ['统', 24], ['筹', 27], ['焰', 28], ['财', 33]]} />
      </div>
    </div>
  );
}

const Svg = ({ children }) => <svg width="24" height="24" viewBox="0 0 24 24">{children}</svg>;
const hex = (c) => <><polygon points="7,1 17,1 23,8 23,16 17,23 7,23 1,16 1,8" fill={c} stroke="#333" strokeWidth=".6" /></>;
const cardStack = <><rect x="13" y="2" width="9" height="14" rx="1" fill="#f0b020" stroke="#333" strokeWidth=".5" /><rect x="8" y="5" width="10" height="14" rx="1" fill="#f05018" stroke="#333" strokeWidth=".5" /><rect x="3" y="9" width="11" height="14" rx="1" fill="#1868b8" stroke="#333" strokeWidth=".5" /></>;
const coins = <><ellipse cx="13" cy="5" rx="7" ry="3.5" fill="#f8cc30" stroke="#a07010" strokeWidth=".7" /><ellipse cx="10" cy="11" rx="8" ry="4" fill="#f0b820" stroke="#a07010" strokeWidth=".7" /><ellipse cx="13" cy="16" rx="8" ry="4" fill="#f8cc30" stroke="#a07010" strokeWidth=".7" /><ellipse cx="11" cy="20" rx="8" ry="3.5" fill="#e8a810" stroke="#a07010" strokeWidth=".7" /></>;
const person = (c) => <><ellipse cx="12" cy="7" rx="5" ry="6" fill="#f0c050" stroke="#222" strokeWidth=".6" /><path d="M7 6c0-7 10-7 10 0-3-2-7-2-10 0z" fill="#111" /><path d="M5 23c0-7 3-9 7-9s7 2 7 9z" fill={c} stroke="#222" strokeWidth=".6" /></>;
const flame = (c) => <><path d="M2 4l4 5 2-7 4 6 4-6 2 7 4-5-1 13H3z" fill="#e89018" stroke="#702010" strokeWidth=".6" /><path d="M4 12h16l-2 10H6z" fill={c} stroke="#301010" strokeWidth=".5" /><ellipse cx="12" cy="16" rx="4" ry="2" fill="#fff" opacity=".8" /></>;
const target = (c) => <><circle cx="11" cy="13" r="10" fill="#f8f8f8" stroke="#222" /><circle cx="11" cy="13" r="7" fill={c} /><circle cx="11" cy="13" r="4.5" fill="#f0d090" /><circle cx="11" cy="13" r="2.2" fill={c === '#2060c0' ? '#e06020' : '#2060c0'} /><line x1="12" y1="12" x2="21" y2="3" stroke="#e05010" strokeWidth="1.5" /></>;
const pot = (c) => <><path d="M4 5l2 17c3 2 9 2 12 0l2-17z" fill={c} stroke="#222" strokeWidth=".7" /><ellipse cx="12" cy="5" rx="8" ry="3.5" fill="#222" stroke="#999" /><text x="12" y="18" fontSize="11" fill="#a07010" textAnchor="middle" fontWeight="bold">$</text></>;
const keycap = (a, b) => <><rect x="1.5" y="1.5" width="21" height="21" rx="3" fill="#e8e8e8" stroke="#333" /><rect x="4" y="3" width="16" height="16" rx="2" fill="#fafafa" />{b ? <><text x="5" y="10" fontSize="9" fontWeight="bold" fill="#222">{a}</text><text x="10" y="19" fontSize="10" fontWeight="bold" fill="#222">{b}</text></> : <text x="12" y="13" fontSize="11" fontWeight="bold" fill="#222" textAnchor="middle">{a}</text>}</>;

const IC = {
  e: <path fillRule="evenodd" d="M12 3C6.5 3 2 7.5 2 13s4.5 10 10 10c4.5 0 8-2.500 9.500-6h-5.500c-1 1.300-2.400 2-4 2-2.700 0-4.700-1.800-5-4.500h15c.1-.5.200-1 .2-1.500C22 7.500 17.500 3 12 3zM7.100 11c.5-2.200 2.500-4 4.900-4s4.400 1.800 4.900 4z" fill="#2088e8" stroke="#103878" strokeWidth=".7" />,
  bubble: <><ellipse cx="15" cy="9" rx="8" ry="7" fill="#f8d878" stroke="#886020" strokeWidth=".6" /><ellipse cx="9" cy="14" rx="7" ry="6" fill="#f8e8a0" stroke="#886020" strokeWidth=".6" /><path d="M7 18l-1 5 5-4z" fill="#f8e8a0" stroke="#886020" strokeWidth=".5" /></>,
  book: <><path d="M5 2h16l-3 18H2z" fill="#d01818" stroke="#701010" strokeWidth=".6" /><path d="M2 20h16l-.5 2.5H2z" fill="#f0e8d8" stroke="#701010" strokeWidth=".5" /><path d="M7 3h12l-.5 3H6.5z" fill="#f04040" /></>,
  pO: person('#e07030'), pB: person('#4090e0'), pG: person('#50b040'),
  ingot: <><path d="M1 6c4 3 6 3 8 2h6c2 1 4 1 8-2-1 10-5 15-11 15S2 16 1 6z" fill="#f0b020" stroke="#805010" strokeWidth=".7" /><ellipse cx="12" cy="8" rx="6" ry="5" fill="#f8d860" stroke="#805010" strokeWidth=".6" /></>,
  bag: <><path d="M8 1h8l-2 5h-4zM9 6h6c5 5 5 11 4 15-1 2-13 2-14 0-1-4-1-10 4-15z" fill="#d8d8c8" stroke="#444" strokeWidth=".7" /><text x="12" y="18" fontSize="12" fontWeight="bold" fill="#b07818" textAnchor="middle">$</text></>,
  fR: flame('#d81840'), fG: flame('#70d830'),
  t1: target('#2060c0'), t2: target('#e08030'),
  pR: pot('#e8a080'), pS: pot('#d8d8d8'),
  bbd: <><rect x="3" y="11" width="6" height="12" fill="#2060c0" stroke="#222" strokeWidth=".4" /><rect x="9" y="14" width="6" height="9" fill="#f0c020" stroke="#222" strokeWidth=".4" /><rect x="15" y="3" width="7" height="18" rx="1" fill="#d83020" stroke="#222" strokeWidth=".4" /><text x="2" y="8" fontSize="8" fontWeight="bold" fill="#222">%</text></>,
  cards: cardStack, coins,
  eye: <><circle cx="12" cy="12" r="11" fill="#1858a8" stroke="#103060" /><circle cx="12" cy="12" r="7" fill="#40a8f0" /><circle cx="12" cy="12" r="3.5" fill="#0c2c60" /></>,
  star: <><path d="M12 1l3 7 8 .5-6 5 2 8-7-4-7 4 2-8-6-5 8-.5z" fill="#f8d828" stroke="#605010" strokeWidth=".8" /></>,
  warn: <><path d="M12 1c7 0 11 4 11 9s-4 9-9 9l-3 4-1-4c-5-1-9-4-9-9S5 1 12 1z" fill="#f8e020" stroke="#333" /><rect x="10.5" y="4" width="3" height="8" fill="#111" /><rect x="10.5" y="13.5" width="3" height="3" fill="#111" /></>,
  bulb: <><path d="M12 1c5 0 8 3 8 8 0 4-3 6-4 10H8C7 15 4 13 4 9c0-5 3-8 8-8z" fill="#f8e898" stroke="#705010" strokeWidth=".7" /><rect x="9" y="19" width="6" height="4" fill="#888" /></>,
  doc: <><path d="M6 1l15 5-5 17L2 18z" fill="#f4f0e8" stroke="#444" strokeWidth=".7" /><circle cx="8" cy="6" r="3" fill="#d82020" /><path d="M9 11l8 3M8 14l8 3" stroke="#999" /></>,
  pie: <><circle cx="11" cy="13" r="10" fill="#1858c8" stroke="#103060" strokeWidth=".6" /><path d="M12 2a10 10 0 0 1 10 10H12z" fill="#f0d030" stroke="#806010" strokeWidth=".5" /><path d="M19 19l4 0-2 3z" fill="#222" /></>,
  fen: <><path d="M5 3l16-2-2 19-16 2z" fill="#f4f0e8" stroke="#444" strokeWidth=".7" /><polyline points="5,17 9,10 12,14 16,5 18,9" fill="none" stroke="#e01818" strokeWidth="2" /></>,
  kline: <><path d="M5 3l15-1 1 19-16 1z" fill="#e8e4d8" stroke="#444" strokeWidth=".7" /><rect x="7" y="11" width="3" height="8" fill="#30a030" /><line x1="8.5" y1="8" x2="8.5" y2="21" stroke="#208020" /><rect x="14" y="6" width="3" height="8" fill="#e03020" /><line x1="15.5" y1="3" x2="15.5" y2="17" stroke="#c02010" /></>,
  f8: keycap('F8'), f10: keycap('F', '10'),
  f11: <><rect x="3" y="5" width="17" height="17" rx="2" fill="#f8f4e8" stroke="#444" /><polyline points="6,12 10,18 21,2" fill="none" stroke="#e88020" strokeWidth="3" /></>,
  scroll: <><path d="M7 2l13 4c2 1 1 4 0 5l-5 11-13-4c3-1 3-3 4-5z" fill="#f4f0e8" stroke="#555" strokeWidth=".7" /><path d="M9 7l7 2M8 10l7 2M7 13l6 2" stroke="#d04080" strokeWidth="1.2" /></>,
  order: <><path d="M8 1h8v7h5L12 17 3 8h5z" fill="#e03810" stroke="#702010" strokeWidth=".5" /><path d="M2 16l5-3 5 6 5-6 5 3-3 6H4z" fill="#f4f4f4" stroke="#444" strokeWidth=".6" /></>,
  buy: <>{hex('#e04818')}<text x="12" y="17" fontSize="14" fontWeight="bold" fill="#f8e8d0" textAnchor="middle">买</text></>,
  sell: <>{hex('#289030')}<text x="12" y="17" fontSize="14" fontWeight="bold" fill="#f0f8e8" textAnchor="middle">卖</text></>,
  undo: <>{hex('#2838a0')}<text x="12" y="17" fontSize="14" fontWeight="bold" fill="#f0f0f8" textAnchor="middle">撤</text></>,
  left: <path d="M1 12L12 2v5h11v10H12v5z" fill="#f8c830" stroke="#704010" strokeWidth=".7" />,
  up: <path d="M12 1l11 11h-6v11H7V12H1z" fill="#3890d8" stroke="#103860" strokeWidth=".7" />,
  down: <path d="M12 23l11-11h-6V1H7v11H1z" fill="#3890d8" stroke="#103860" strokeWidth=".7" />,
  watch: <><circle cx="11" cy="14" r="9.5" fill="#f0a030" stroke="#603010" /><circle cx="11" cy="14" r="6.5" fill="#f8f0d0" /><line x1="11" y1="14" x2="15" y2="10" stroke="#c02020" strokeWidth="1.5" /><rect x="9" y="2" width="4" height="3" fill="#888" /><circle cx="19" cy="4" r="2.5" fill="none" stroke="#888" /></>,
  globe: <><circle cx="12" cy="12" r="11" fill="#2890e0" stroke="#104080" strokeWidth=".7" /><path d="M6 5c4-2 8 0 8 3s-4 3-5 6-3-1-3-4zM15 16c2-1 4 0 3 2s-3 2-3-2z" fill="#80c8f8" /></>,
  eraser: <><path d="M7 3l15 11-5 7L2 10z" fill="#e8e8f0" stroke="#555" strokeWidth=".7" /><path d="M6 7l8 6 2-3-8-6z" fill="#3860b0" /></>,
  pencil: <><path d="M17 1l6 5L8 19l-7 3 3-7z" fill="#f8d040" stroke="#604010" strokeWidth=".7" /><path d="M17 1l6 5-2 2-6-5z" fill="#e06060" /></>,
  formula: <><path d="M4 2h14l3 3v18H7l-3-3z" fill="#e89020" stroke="#603010" strokeWidth=".6" /><rect x="10" y="5" width="9" height="9" fill="#f8f8f0" /><path d="M9 16h11v6H9z" fill="#d84020" /></>,
  tv: <><rect x="2" y="1" width="20" height="22" rx="3" fill="#f0a020" stroke="#603010" strokeWidth=".7" /><rect x="5" y="4" width="14" height="13" rx="1" fill="#686868" /><rect x="7" y="19" width="10" height="2" fill="#803010" /></>,
  house: <><path d="M12 1L2 10l2 2v10h16V12l2-2z" fill="#f8d868" stroke="#604010" strokeWidth=".6" /><path d="M12 1L2 10l2 2L12 5l8 7 2-2z" fill="#d82020" /><rect x="10" y="14" width="5" height="8" fill="#a86020" /></>,
  hearts: <><path d="M8 21C2 16 0 13 1 8c1-4 6-5 8-1 2-4 7-3 8 1s-3 9-9 13z" fill="#e03818" stroke="#701010" strokeWidth=".5" /><path d="M16 23c-5-4-7-7-6-11 1-3 5-4 7-1 2-3 6-2 7 1 0 4-3 8-8 11z" fill="#f86030" stroke="#701010" strokeWidth=".5" /></>,
};

const bar1 = [['新闻','e','b'],['市场','bubble'],['报告','book'],['内参','pO'],['内幕','pB','r'],0,['DDE选股','ingot'],['拓赢','bag','r'],['选股1','fR'],['选股2','fG'],['荐股1','t1'],['荐股2','t2'],['股池1','pR','r'],['股池2','pS'],0,['大盘BBD','bbd','r'],['板块BBD','cards'],['资金流','coins'],0,['决策','eye','r'],['评级','star'],['评测','warn'],['解股','bulb'],0,['板块','cards'],['自选','doc','r'],['盘口','pie'],['分时','fen'],['K线','kline'],['周期','f8'],['F10','f10'],['F11','f11'],['公司','scroll'],0,['下单','order'],['买入','buy'],['卖出','sell'],['撤单','undo'],0,['返回','left'],['上翻','up'],['下翻','down'],0,['测速','watch'],['下载','globe'],['修正','eraser'],['画线','pencil','b'],['公式','formula','r'],0,['直播','tv','r'],['充值','coins'],['股灵通','pG'],['聊天室','house'],['论坛1','hearts','r']];

function Toolbar() {
  return (
    <div className="relative h-[50px] bg-[#ece9d8] pl-[3px] flex overflow-hidden">
      {bar1.map((it, i) => it === 0
        ? <div key={i} className="w-[6px] flex justify-center pt-[4px]"><div className="w-[2px] h-[42px] border-l border-[#aca899] border-r border-r-white" /></div>
        : (
          <div key={i} className="w-[40px] flex flex-col items-center pt-[7px]">
            <Svg>{IC[it[1]]}</Svg>
            <span className={`mt-[2px] leading-[14px] whitespace-nowrap ${it[0].includes('BBD') ? 'text-[11px] tracking-[-0.6px]' : 'text-[12px]'} ${it[2] === 'r' ? 'text-[#e01010]' : it[2] === 'b' ? 'text-[#1010d0]' : 'text-[#222]'}`}>{it[0]}</span>
          </div>
        ))}
      <div className="ml-[10px] w-[8px] flex flex-col pt-[9px]">
        <div className="w-[7px] h-[18px] rounded-l-full bg-[#f0c030] border border-[#a07010]" />
        <span className="mt-[6px] text-[12px] leading-[14px] text-[#222] whitespace-nowrap">讠</span>
      </div>
      <div className="absolute right-[4px] top-[4px] text-[12px] leading-[10px] font-bold text-[#222]">»</div>
    </div>
  );
}

const menu = [['系统'],['资讯'],['辅助'],['大盘分析',1],['板块分析',1],['个股分析',1],['盘口分析'],['选股模型',1],['LEVEL-2'],['创业板'],['报价'],['分析'],['期货'],['港汇'],['基金'],['理财'],['工具'],['服务']];

function WinBtn({ children, red }) {
  return <div className={`w-[21px] h-[19px] rounded-[3px] border border-white flex items-center justify-center ${red ? 'bg-gradient-to-br from-[#e88868] to-[#c83010]' : 'bg-gradient-to-br from-[#5890f0] to-[#1848c8]'}`}>{children}</div>;
}

function TopBars() {
  return (
    <>
      <div className="h-[26px] bg-gradient-to-b from-[#2a78f0] via-[#0658e0] to-[#0448c8] flex items-center pl-[2px] text-white whitespace-nowrap">
        <svg width="18" height="18" viewBox="0 0 18 18"><rect width="18" height="18" rx="2" fill="#b82020" /><path d="M3 14c2-6 3-9 6-11 3 2 4 5 6 11-4-2-8-2-12 0z" fill="#f0c8b0" /><circle cx="9" cy="11" r="2" fill="#fff" /></svg>
        <span className="ml-[2px] text-[14px] font-bold tracking-[0.6px] w-[405px]">同花顺深圳电信2 - 『普天同庆』Ⅲ版 - 深圳Level-2技术分析</span>
        <span className="ml-[1043px] w-[189px] text-[12px] text-[#e0e8f8]">客服热线:<span className="text-[11px]"> 95105885 0571-56768888</span></span>
        <span className="ml-[6px] w-[59px] h-[17px] bg-[#f08810] border border-[#f8c060] text-[13px] leading-[15px] text-center font-bold text-black">手机炒股</span>
        <span className="ml-[4px] w-[33px] h-[17px] bg-[#e8f0e0] text-[13px] leading-[17px] text-center font-bold tracking-[2px] text-[#208020]">资讯</span>
        <span className="ml-[3px] w-[32px] h-[17px] bg-[#f0e0e0] text-[13px] leading-[17px] text-center font-bold tracking-[2px] text-[#c01010]">委托</span>
        <span className="ml-[3px] w-[33px] h-[17px] bg-[#e0e8f0] text-[13px] leading-[17px] text-center font-bold tracking-[2px] text-[#204060]">行情</span>
        <div className="ml-[19px] flex gap-[2px]">
          <WinBtn><div className="w-[7px] h-[3px] bg-white mt-[8px] mr-[5px]" /></WinBtn>
          <WinBtn><div className="relative w-[10px] h-[10px]"><div className="absolute right-0 top-0 w-[7px] h-[7px] border border-white" /><div className="absolute left-0 bottom-0 w-[7px] h-[7px] border-2 border-white" /></div></WinBtn>
          <WinBtn red><svg width="11" height="11" viewBox="0 0 11 11"><path d="M1 1l9 9M10 1l-9 9" stroke="#fff" strokeWidth="2.2" /></svg></WinBtn>
        </div>
      </div>
      <div className="h-[20px] bg-[#ece9d8] flex items-center pl-[6px] gap-4 text-[12px] whitespace-nowrap">
        {menu.map(([t, r]) => <span key={t} className={r ? 'text-[#e01010]' : 'text-[#222]'}>{t}</span>)}
        <div className="flex items-center -ml-[6px]">
          <svg width="18" height="18" viewBox="0 0 18 18"><path d="M9 2L1 9h2v8h12V9h2z" fill="#c8c8c8" /><path d="M9 4L2 10l1 1 6-5 6 5 1-1z" fill="#c82020" /><path d="M4 11l5-4 5 4v6H4z" fill="#d83020" /><rect x="7" y="12" width="4" height="5" fill="#f0e8d0" /></svg>
          <span className="w-[58px] h-[17px] ml-[-1px] bg-[#a83018] text-[#f8f0e8] text-[13px] leading-[17px] text-center">我的专区</span>
        </div>
        <span className="ml-[3px] text-[#222]">延时港股行情由同花顺提供</span>
      </div>
      <div className="h-[2px] bg-[#8c8c84] border-b border-white" />
    </>
  );
}

const idx = [
  [20, '沪', 'l'], [112, '3073.78', Rr], [88, '+23.26', Rr], [100, '+0.76%', Rr], [185, '929.4+112.7', C, '亿'], [15, '深', 'l'],
  [125, '12813.29', Rr], [95, '+165.78', Rr], [91, '+1.31%', Rr], [189, '577.8+27.6', C, '亿'], [22, '创', 'l'],
  [101, '1.00', 'text-white'], [75, '+0.00', 'text-white'], [86, '+0.00%', 'text-white'], [155, '19.60', C, '亿'], [11, '', 'l'], [31, '中小', 'l'],
  [98, '5255.88', Rr], [90, '+113.49', Rr], [95, '+2.21%', Rr], [133, '179.38', C, '亿'],
];

function IndexBar() {
  return (
    <div className="h-[21px] border-b border-t border-[#a01414] flex items-center whitespace-nowrap">
      {idx.map(([w, t, c, u], i) => c === 'l'
        ? <span key={i} style={{ width: w }} className="text-[16px] leading-[19px] text-[#d8d8d8] pl-[2px] shrink-0">{t}</span>
        : <span key={i} style={{ width: w }} className={`text-right text-[14px] font-bold shrink-0 ${c}`}>{t}{u ? <span className="text-[17px] font-normal">{u}</span> : null}</span>)}
    </div>
  );
}

function StatusBar() {
  const cell = 'h-full flex items-center justify-center border-l border-[#a01414]';
  return (
    <div className="h-[18px] flex items-center whitespace-nowrap overflow-hidden">
      <span className="w-[69px] pl-[6px] h-full border-r border-[#a01414] text-[13px] leading-[18px] font-bold text-[#e84808]">最新警告</span>
      <div className="w-[1597px] overflow-hidden pl-[1101px] text-[13px] leading-[18px] font-bold text-[#f8f020]">直接回车可切换到行情报表。在K线窗口移动光标，按"Ctrl+Enter"键或双击，查看历史</div>
      <div className={`${cell} w-[24px]`}><svg width="15" height="15" viewBox="0 0 15 15"><rect x="2" y="2" width="8" height="8" fill="#6060c0" stroke="#ccc" /><rect x="6" y="5" width="7" height="8" fill="#c0c0e0" stroke="#ccc" /></svg></div>
      <div className={`${cell} w-[23px]`}><svg width="15" height="15" viewBox="0 0 15 15"><rect x="3" y="3" width="9" height="9" fill="none" stroke="#ccc" /><rect x="5" y="5" width="5" height="5" fill="#ccc" /><path d="M0 1l3 2M15 1l-3 2M0 14l3-2M15 14l-3-2" stroke="#ccc" /></svg></div>
      <div className={`${cell} w-[23px] text-[15px] font-bold text-[#f08020]`}>记</div>
      <div className={`${cell} w-[60px] text-[13px] font-bold text-[#e8e8e8]`}>股灵通</div>
      <div className={`${cell} w-[24px]`}><svg width="13" height="13" viewBox="0 0 13 13"><path d="M1 1h11v8H7l-3 3V9H1z" fill="#f08020" /><path d="M3 3h7M3 5h7" stroke="#fff" /></svg></div>
      <div className={`${cell} w-[30px]`}><svg width="15" height="15" viewBox="0 0 15 15"><path d="M2 5h3l4-4v13l-4-4H2z" fill="#d8c040" /><path d="M11 4v7M13 3v9" stroke="#888" /></svg></div>
      <div className={`${cell} w-[70px] text-[14px] text-[#c8c8c8] tracking-[0.4px] font-['Liberation_Sans']`}>03:41:21</div>
    </div>
  );
}

function TaskBtn({ w, active, t, icon, ml }) {
  return (
    <div style={{ width: w, marginLeft: ml }} className={`h-[25px] rounded-[3px] flex items-center pl-[8px] text-[13px] text-white whitespace-nowrap ${active ? 'bg-[#1c48a8]' : 'bg-[#3c80f0]'}`}>
      {icon === 'b'
        ? <svg width="16" height="16" viewBox="0 0 16 16"><rect width="16" height="16" rx="2" fill="#b82020" /><path d="M3 12c2-5 3-7 5-9 2 2 3 4 5 9-3-2-7-2-10 0z" fill="#f0c8b0" /></svg>
        : <svg width="16" height="16" viewBox="0 0 16 16"><circle cx="8" cy="8" r="7" fill="#a8c8f0" /><rect x="4" y="4" width="8" height="8" fill="#3060a0" /><rect x="6" y="7" width="4" height="5" fill="#fff" /></svg>}
      <span className="ml-[5px]">{t}</span>
    </div>
  );
}

function Taskbar() {
  return (
    <div className="h-[30px] bg-gradient-to-b from-[#3c80f0] via-[#2460dc] to-[#1c4cc0] flex items-center whitespace-nowrap">
      <div className="w-[95px] h-full rounded-r-[10px] bg-gradient-to-b from-[#70b060] via-[#3c8c3c] to-[#2c702c] flex items-center pl-[10px] text-white shrink-0">
        <svg width="18" height="18" viewBox="0 0 18 18"><path d="M2 3l6-1v6H2z" fill="#e85030" /><path d="M9 2l7 1-1 6H9z" fill="#60c040" /><path d="M2 9h6v7l-7-1z" fill="#3880e0" /><path d="M9 9h6l-1 7-5-1z" fill="#f8c830" /></svg>
        <span className="ml-[8px] text-[22px] italic font-normal leading-[26px]">开始</span>
      </div>
      <div className="ml-[15px] flex gap-[7px] w-[97px] shrink-0">
        <svg width="16" height="16" viewBox="0 0 16 16"><circle cx="8" cy="8" r="7" fill="#a8c8f0" /><rect x="5" y="5" width="6" height="6" fill="#3060a0" /></svg>
        <svg width="16" height="18" viewBox="0 0 16 18"><ellipse cx="8" cy="6" rx="5" ry="5.5" fill="#111" /><ellipse cx="8" cy="12" rx="6" ry="5.5" fill="#f8f8f8" stroke="#111" /><path d="M3 9h10v2H3z" fill="#e02020" /></svg>
        <svg width="16" height="16" viewBox="0 0 16 16"><circle cx="8" cy="8" r="7.5" fill="#f0a060" /><circle cx="8" cy="8" r="4" fill="#f8e0c0" /></svg>
        <svg width="16" height="16" viewBox="0 0 16 16"><rect x="2" y="1" width="12" height="14" rx="3" fill="#d8e8f8" stroke="#2060b0" /><path d="M6 4h4v3H6zM5 9h6v3H5z" fill="#3070c0" /></svg>
      </div>
      <TaskBtn w={157} ml={7} t="理想论坛 - 中国..." />
      <TaskBtn w={158} ml={4} active icon="b" t="同花顺深圳电信2 ..." />
      <TaskBtn w={156} ml={2} icon="b" t="同花顺上海网通2 ..." />
      <div className="ml-auto w-[77px] h-full bg-gradient-to-b from-[#2c9cf0] to-[#1478d8] border-l border-[#104080] flex items-center text-white text-[12px]">
        <div className="-ml-[9px] w-[17px] h-[17px] rounded-full bg-[#3070d8] border border-white flex items-center justify-center text-[12px] font-bold leading-none">‹</div>
        <span className="ml-[2px] px-[2px] bg-[#108080] font-['Liberation_Mono']">CH</span>
        <span className="ml-[9px] font-['Liberation_Mono']">3:41</span>
      </div>
    </div>
  );
}

export default function App() {
  return (
    <div className="w-[1920px] h-[1080px] overflow-hidden bg-black flex flex-col font-['Liberation_Sans','Noto_Sans_CJK_SC',sans-serif]">
      <TopBars />
      <Toolbar />
      <div className="h-[910px] flex overflow-hidden shadow-[inset_1px_0_0_#808080]">
        <LeftCol />
        <div className="border-l border-[#a01414] -ml-px"><MidCol /></div>
        <RightCol />
      </div>
      <IndexBar />
      <StatusBar />
      <div className="h-[3px] bg-[#d8e8f8]" />
      <Taskbar />
    </div>
  );
}
